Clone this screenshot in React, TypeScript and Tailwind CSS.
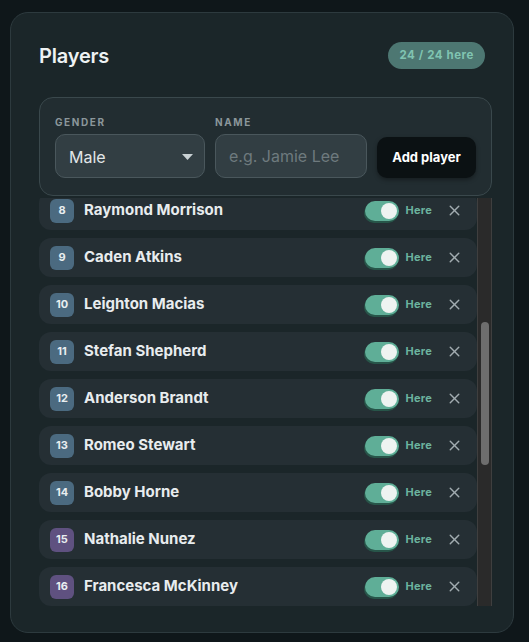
import { useLayoutEffect, useRef } from 'react';
import { X } from 'lucide-react';

type Player = { id: number; name: string; gender: 'M' | 'F'; here: boolean };

const NAMES: [string, 'M' | 'F'][] = [
  ['Owen Fletcher', 'M'],
  ['Marcus Bell', 'M'],
  ['Julian Ortega', 'M'],
  ['Theo Navarro', 'M'],
  ['Dylan Crawford', 'M'],
  ['Elliot Hayes', 'M'],
  ['Graham Pierce', 'M'],
  ['Raymond Morrison', 'M'],
  ['Caden Atkins', 'M'],
  ['Leighton Macias', 'M'],
  ['Stefan Shepherd', 'M'],
  ['Anderson Brandt', 'M'],
  ['Romeo Stewart', 'M'],
  ['Bobby Horne', 'M'],
  ['Nathalie Nunez', 'F'],
  ['Francesca McKinney', 'F'],
  ['Priya Raman', 'F'],
  ['Hazel Whitaker', 'F'],
  ['Ines Carvalho', 'F'],
  ['Maya Lindqvist', 'F'],
  ['Rosa Delgado', 'F'],
  ['Clara Jennings', 'F'],
  ['Ada Okafor', 'F'],
  ['Lena Hartmann', 'F'],
];

const players: Player[] = NAMES.map(([name, gender], i) => ({ id: i + 1, name, gender, here: true }));

function Toggle({ on }: { on: boolean }) {
  return (
    <span
      className={`relative flex h-[20px] w-[34px] items-center rounded-full shadow-[-1px_2px_0_rgba(40,90,75,0.9)] ${
        on ? 'bg-[#5fae97]' : 'bg-[#3a464b]'
      }`}
    >
      <span
        className={`absolute top-[2px] h-[16px] w-[16px] rounded-full bg-[#eef3f1] ${on ? 'left-[16px]' : 'left-[2px]'}`}
      />
    </span>
  );
}

function PlayerRow({ p }: { p: Player }) {
  return (
    <div className="flex h-[39px] shrink-0 items-center rounded-[12px] bg-[#252f34] pl-[11px] pr-[11px]">
      <span
        className={`flex h-[24px] w-[24px] items-center justify-center rounded-[6px] text-[11px] font-bold text-[#e9eef0] ${
          p.gender === 'M' ? 'bg-[#4b6a80]' : 'bg-[#5f5180]'
        }`}
      >
        {p.id}
      </span>
      <span className="ml-[10px] flex-1 text-[15px] font-bold text-[#e8ecee]">{p.name}</span>
      <Toggle on={p.here} />
      <span className="ml-[7px] text-[11px] font-bold tracking-[0.02em] text-[#6cb39e]">Here</span>
      <button type="button" className="ml-[10px] flex h-[24px] w-[24px] items-center justify-center text-[#a2acb0]">
        <X size={17} strokeWidth={2} />
      </button>
    </div>
  );
}

export default function App() {
  const listRef = useRef<HTMLDivElement>(null);
  const hereCount = players.filter((p) => p.here).length;

  // list is scrolled so player 8 sits just under the form
  useLayoutEffect(() => {
    if (listRef.current) listRef.current.scrollTop = 336;
  }, []);

  return (
    <div className="min-h-[642px] bg-[#0f171a] px-[10px] pt-[12px] font-['Inter','Noto_Sans',sans-serif]">
      <div className="flex h-[621px] w-[504px] flex-col rounded-[18px] border border-[#2d3a3e] bg-[#1b2629] pl-[28px] pr-[21px] pt-[28px]">
        <div className="flex h-[29px] items-center justify-between pr-[7px]">
          <h2 className="text-[20px] font-semibold tracking-[-0.01em] text-[#eef2f3]">Players</h2>
          <span className="flex h-[27px] items-center rounded-full bg-[#4d7772] px-[11px] text-[11.5px] font-bold tracking-[0.05em] text-[#80c4b1]">
            {hereCount} / {players.length} here
          </span>
        </div>

        <div className="mt-[27px] flex items-end gap-[10px] rounded-[14px] border border-[#3a484c] bg-[#222d31] px-[15px] pb-[17px] pt-[17px]">
          <label className="flex flex-col gap-[4px]">
            <span className="text-[10px] font-bold tracking-[0.16em] text-[#8b979b]">GENDER</span>
            <span className="flex h-[44px] w-[150px] items-center justify-between rounded-[10px] border border-[#4a575c] bg-[#323e43] pl-[13px] pr-[11px] pt-[1px] text-[16px] text-[#e1e6e8]">
              Male
              <svg width="11" height="6" viewBox="0 0 11 6" className="fill-[#c9d1d4]">
                <path d="M0 0h11L5.5 6z" />
              </svg>
            </span>
          </label>
          <label className="flex flex-col gap-[4px]">
            <span className="text-[10px] font-bold tracking-[0.16em] text-[#8b979b]">NAME</span>
            <input
              placeholder="e.g. Jamie Lee"
              className="h-[44px] w-[152px] rounded-[10px] border border-[#4a575c] bg-[#323e43] px-[13px] text-[16px] text-[#e1e6e8] outline-none placeholder:text-[#6e7a7e]"
            />
          </label>
          <button
            type="button"
            className="h-[41px] w-[99px] rounded-[10px] bg-[#0b1113] text-[13px] font-bold text-white shadow-[0_2px_4px_rgba(0,0,0,0.35)]"
          >
            Add player
          </button>
        </div>

        <div className="mt-[2px] flex h-[408px]">
          <div ref={listRef} className="flex w-[438px] flex-col gap-[8px] overflow-hidden">
            {players.map((p) => (
              <PlayerRow key={p.id} p={p} />
            ))}
          </div>
          <div className="relative w-[15px] border-x border-[#3f3f3f] bg-[#2a2a2a]">
            <div className="absolute left-[3px] top-[124px] h-[143px] w-[8px] rounded-full bg-[#6d6d6d]" />
          </div>
        </div>
      </div>
    </div>
  );
}
